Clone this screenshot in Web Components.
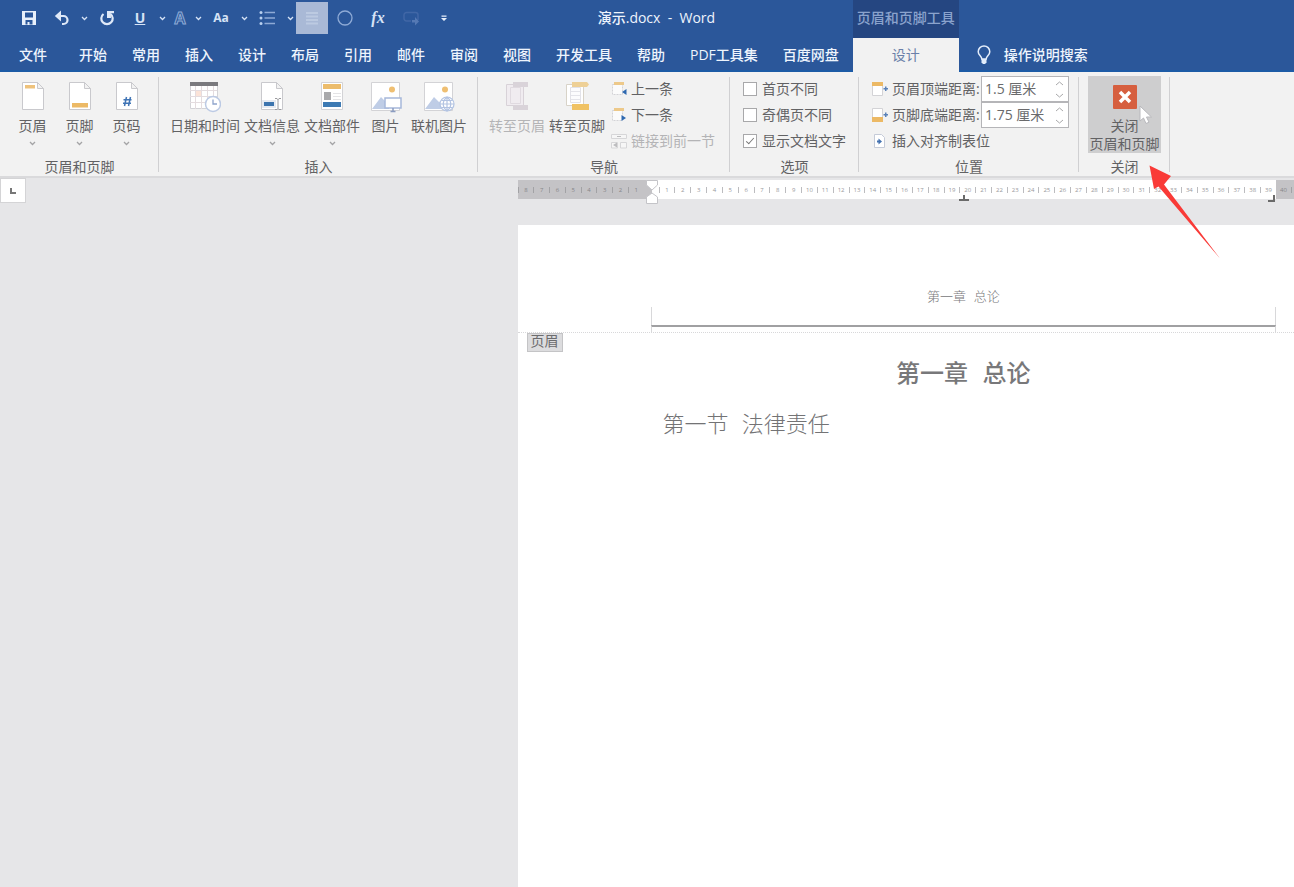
<!DOCTYPE html>
<html lang="zh-CN">
<head>
<meta charset="utf-8">
<title>演示.docx - Word</title>
<style>
  html, body { height: 100%; }
  body {
    margin: 0;
    background: #e6e6e8;
    color: #626264;
    font: 14px/18px "Open Sans", "Noto Sans CJK SC", sans-serif;
  }
</style>
</head>
<body>
<word-app></word-app>

<script>
const ICONS = {
  save: [16, 16, '<path fill="#e8f0fb" fill-rule="evenodd" d="M1 1h14v14H1zM4 2.500v5h8v-5zM4.500 10v4.500h2V12h2v2.500h3V10z"/>'],
  undo: [16, 16, '<path fill="none" stroke="#dfe9f8" stroke-width="2.200" d="M3 6h6.500a4 4 0 0 1 0 8H8"/><path fill="#dfe9f8" d="M7 .5v11L.8 6z"/>'],
  redo: [16, 16, '<path fill="none" stroke="#dfe9f8" stroke-width="2.200" d="M11.500 4A5.700 5.700 0 1 1 4.500 4"/><path fill="#dfe9f8" d="M8 1h7v2.200h-3.200L12 8H8z"/>'],
  list: [16, 16, '<g fill="#b9d0ef"><circle cx="2" cy="2.500" r="1.500"/><circle cx="2" cy="8" r="1.500"/><circle cx="2" cy="13.500" r="1.500"/></g><path stroke="#8eaad6" stroke-width="1.400" d="M5.500 2.500H16M5.500 8H16M5.500 13.500H16"/>'],
  align: [14, 14, '<path stroke="#bccae1" stroke-width="2" d="M1 2h12M1 5.500h12M1 9h12M1 12.500h12"/>'],
  circle: [16, 16, '<circle cx="8" cy="8" r="7" fill="none" stroke="#8fabd6" stroke-width="1.300"/>'],
  shape: [16, 16, '<path fill="none" stroke="#4167a6" stroke-width="1.500" d="M8 11H3.500a2.500 2.500 0 0 1-2.500-2.500V5a2.500 2.500 0 0 1 2.500-2.500h9A2.500 2.500 0 0 1 15 5v5"/><path fill="#5579b4" d="M9 10h3V7l4 4.500-4 4v-3H9z"/>'],
  more: [8, 8, '<path fill="#e8f0fb" d="M1.500 1.500h5v1.200h-5zM1 4h6L4 7z"/>'],
  chev: [7, 5, '<path fill="none" stroke="currentColor" stroke-width="1.300" d="M1 1l2.500 2.500L6 1"/>'],
  chevUp: [9, 5, '<path fill="none" stroke="currentColor" d="M1 4l3.500-3L8 4"/>'],
  chevDown: [9, 5, '<path fill="none" stroke="currentColor" d="M1 1l3.500 3L8 1"/>'],
  bulb: [14, 20, '<path fill="none" stroke="#e3edfb" stroke-width="1.500" d="M4.800 14c0-2.700-3.600-3.800-3.600-7.300a5.800 5.800 0 0 1 11.600 0c0 3.500-3.600 4.600-3.600 7.300z"/><path fill="#e3edfb" d="M4.500 14h5v3.500L8 19H6l-1.500-1.500z"/>'],
  header: [24, 30, '<path fill="#fff" stroke="#c9c9cd" d="M1.500 1.500h15l6 6v21h-21z"/><path fill="#f2f2f2" stroke="#c9c9cd" d="M16.500 1.500v6h6z"/><path fill="#eec27c" d="M4 4h10v3.500H4z"/>'],
  footer: [24, 30, '<path fill="#fff" stroke="#c9c9cd" d="M1.500 1.500h15l6 6v21h-21z"/><path fill="#f2f2f2" stroke="#c9c9cd" d="M16.500 1.500v6h6z"/><path fill="#ecb965" d="M4 22h16v4.500H4z"/>'],
  pageNumber: [24, 30, '<path fill="#fff" stroke="#c9c9cd" d="M1.500 1.500h15l6 6v21h-21z"/><path fill="#f2f2f2" stroke="#c9c9cd" d="M16.500 1.500v6h6z"/><path stroke="#3f74b5" stroke-width="1.500" d="M11.500 16l-2 9M15.500 16l-2 9M8.500 18.700h8M8 22.200h8"/>'],
  date: [32, 32, '<path fill="#fff" stroke="#d3d3d7" d="M1.500 4.500h27v23h-27z"/><path fill="#fbe3d8" d="M6 9h6v6H6z"/><path stroke="#e4dcdf" d="M1 9.500h27M1 15.500h27M1 21.500h27M6.500 4v24M12.500 4v24M18.500 4v24M24.500 4v24"/><path fill="#7a7a7e" d="M1 1h28v4H1z"/><circle cx="24" cy="23" r="7.500" fill="#fff" stroke="#bccae4" stroke-width="1.500"/><path fill="none" stroke="#8fa4cb" stroke-width="1.300" d="M24 18.500V23h4"/>'],
  docInfo: [24, 30, '<path fill="#fff" stroke="#c9c9cd" d="M1.500 1.500h15l6 6v21h-21z"/><path fill="#f2f2f2" stroke="#c9c9cd" d="M16.500 1.500v6h6z"/><path fill="#e6eaf1" d="M2 19h14v8H2z"/><path fill="#3c74ae" d="M4 21h10v4H4z"/><path fill="none" stroke="#9a9a9e" d="M15 17.500h2l1 1 1-1h2M18 18v9.500M15 28.500h2l1-1 1 1h2"/>'],
  parts: [24, 30, '<path fill="#fff" stroke="#d3d3d6" d="M1.500 1.500h21v27h-21z"/><path fill="#ecbc6b" d="M3 3h18v5H3z"/><path fill="#a9a9ab" d="M4 11h7v8H4z"/><path stroke="#e4e4e6" d="M13 12.500h8M13 15.500h8M13 18.500h8"/><path fill="#3d7ab3" d="M3 21h18v5H3z"/>'],
  picture: [32, 32, '<path fill="#fff" stroke="#d3d3d6" d="M1.500 1.500h28v28h-28z"/><circle cx="22" cy="8.500" r="3" fill="#efbf72"/><path fill="#bfcde6" d="M2 28l9-12 5 5 3-2v9H2z"/><path fill="#fff" stroke="#a6b8da" stroke-width="1.500" d="M15 17h16v10H15z"/><path stroke="#8b9cc0" stroke-width="1.500" d="M23 27v3M20.500 30.500h5"/>'],
  online: [32, 32, '<path fill="#fff" stroke="#d3d3d6" d="M1.500 1.500h28v28h-28z"/><circle cx="22" cy="8.500" r="3" fill="#efbf72"/><path fill="#bfcde6" d="M2 28l9-12 5 5 3-2v9H2z"/><g fill="#fff" stroke="#b2c3e2" stroke-width="1.200"><circle cx="24" cy="23" r="7"/><path fill="none" d="M17 23h14M24 16v14M18.500 19.500h11M18.500 26.500h11M24 16c-5 4-5 10 0 14M24 16c5 4 5 10 0 14"/></g>'],
  gotoHeader: [24, 30, '<path fill="#f0ecf0" stroke="#d8d2d8" d="M1.500 3.500h17v21h-17z"/><path fill="#d9d3d9" d="M8 1h15v5H8zM8 24h15v5H8z"/><path fill="#f0ecf0" stroke="#e0dae0" d="M5.500 6.500h10v16h-10z"/>'],
  gotoFooter: [24, 30, '<path fill="#fff" stroke="#d8d3c8" d="M1.500 3.500h17v21h-17z"/><path fill="#eed096" d="M7 1h15l2 2.500-2 2.500H7z"/><path fill="#fcfcfe" stroke="#e2e2e8" d="M5.500 6.500h10v15h-10z"/><path stroke="#e4e4ea" d="M6 10.500h9M6 14.500h9M6 18.500h9"/><path fill="#f0c264" d="M7 23h17v6H7z"/>'],
  prev: [16, 16, '<path fill="#fbfbfb" stroke="#d3d3d6" stroke-dasharray="2 1" d="M1.500 3.500h10v10h-10z"/><path fill="#edc98a" d="M3 1h10v3H3z"/><path fill="#2f69b0" d="M15.500 8v6L11 11z"/>'],
  next: [16, 16, '<path fill="#fbfbfb" stroke="#d3d3d6" stroke-dasharray="2 1" d="M1.500 3.500h10v10h-10z"/><path fill="#edc98a" d="M3 1h10v3H3z"/><path fill="#2f69b0" d="M10.500 8v6l4.500-3z"/>'],
  link: [16, 16, '<path fill="#f6f6f6" stroke="#d6d6d8" d="M.5 1.500h15v4H.5zM.5 15V9.500h6V15zM9.500 15V9.500h6V15z"/><path fill="#bdbdbf" d="M2 12l4-2.500v5zM6 3h4v1H6z"/>'],
  topDistance: [16, 16, '<path fill="#fff" stroke="#d3d3d6" d="M.5 1.500h10v13H.5z"/><path fill="#ecb965" d="M0 1h11v4H0z"/><path fill="#5b82b8" d="M13 5.500h1.500V7H16v1.500h-1.500V10H13V8.500h-1.500V7H13z"/>'],
  bottomDistance: [16, 16, '<path fill="#fff" stroke="#d3d3d6" d="M.5 1.500h10v13H.5z"/><path fill="#ecb965" d="M0 10h11v5H0z"/><path fill="#5b82b8" d="M13 5.500h1.500V7H16v1.500h-1.500V10H13V8.500h-1.500V7H13z"/>'],
  alignTab: [16, 16, '<path fill="#fff" stroke="#c5cbd8" d="M2.500 1.500h7l3 3v10h-10z"/><path fill="#4472b0" d="M5 7.500h1.500v-2l3.500 3-3.500 3v-2H5z"/>'],
  close: [26, 26, '<rect x="1" y="1" width="24" height="24" rx="1" fill="#d65f3f"/><path stroke="#fff" stroke-width="3.500" d="M8 8l10 10M18 8L8 18"/>'],
  cursor: [14, 20, '<path fill="#fff" stroke="#b9b9bd" d="M1 1v15l3.500-3 2.500 5.500 3-1.300-2.500-5.200H12.500z"/>'],
  arrow: [72, 94, '<path fill="#f93a37" d="M.5.500L22 11l-7 8.500L71 93.500 9.500 21.500 5 24z"/>'],
  indent: [12, 24, '<path fill="#fff" stroke="#c4c4c8" d="M.5.500h11v4.500L6 10 .5 5zM6 13l5.500 4v6.500H.5V17z"/>'],
  centerTab: [10, 6, '<path stroke="#6a6a6a" stroke-width="2" d="M5 0v5M0 5h10"/>'],
  cornerTab: [8, 8, '<path fill="none" stroke="#777" stroke-width="2" d="M2 1v5h5"/>'],
  rightTab: [8, 8, '<path fill="none" stroke="#6a6a6a" stroke-width="2" d="M6 0v6H0"/>'],
};

/* Registers an element whose shadow root is built from its attributes. */
function element(tag, render) {
  customElements.define(tag, class extends HTMLElement {
    constructor() { super(); this.attachShadow({ mode: 'open' }); }
    connectedCallback() {
      if (this.shadowRoot.hasChildNodes()) return;
      const template = document.createElement('template');
      template.innerHTML = render(this);
      this.shadowRoot.append(template.content.cloneNode(true));
    }
  });
}
const RESET = `button { font: inherit; color: inherit; background: none; border: 0; padding: 0; margin: 0; }`;

element('app-icon', el => {
  const [w, h, body] = ICONS[el.getAttribute('name')];
  return `<style>:host{display:inline-flex;flex:none} svg{display:block}</style>
    <svg width="${w}" height="${h}" viewBox="0 0 ${w} ${h}" aria-hidden="true">${body}</svg>`;
});

/* Quick access toolbar button */
element('quick-button', el => `<style>${RESET}
  :host { display: block; flex: 0 0 34px; height: 32px; color: #d6e3f6; }
  :host([size="menu"]) { flex-basis: 12px; }
  :host([size="small"]) { flex-basis: 24px; }
  :host([size="wide"]) { flex-basis: 32px; }
  :host([active]) { background: #a9b9d6; }
  button { width: 100%; height: 100%; display: flex; align-items: center; justify-content: center; }
  </style><button aria-label="${el.getAttribute('label')}"><slot></slot></button>`);

element('ribbon-tab', el => `<style>
  :host { display: block; }
  a { display: block; line-height: 34px; color: #eef4fd; font-weight: 500; text-decoration: none; white-space: nowrap; }
  :host([active]) a { background: #f2f2f2; color: #6a7fa8; text-align: center; font-weight: 400; }
  </style><a href="#"><slot></slot></a>`);

element('title-bar', () => `<style>${RESET}
  :host { display: grid; grid-template: 38px 34px / auto 106px 1fr; background: #2b579a; box-shadow: inset 0 -2px #1d5ba6; }
  .top { display: flex; align-items: center; padding: 0 0 2px 12px; }
  h1 { flex: 1; margin: 0; font-size: 14px; line-height: 18px; font-weight: 500; color: #eef4fd; text-align: center; white-space: pre; }
  .context { background: #254681; color: #8ba3cd; font-weight: 500; line-height: 36px; text-align: center; white-space: nowrap; }
  nav { grid-area: 2 / 1; display: flex; gap: 25px; padding: 0 14px 0 19px; }
  nav ribbon-tab:first-child { margin-right: 7px; }
  .design { grid-area: 2 / 2; }
  .tell { grid-area: 2 / 3; display: flex; align-items: center; gap: 13px; padding-left: 18px; color: #eef4fd; font-weight: 500; }
  .u { font-weight: 700; text-decoration: underline; }
  .a { color: #2b579a; font-size: 16px; font-weight: 700; -webkit-text-stroke: 1px #8fabd6; }
  .aa { font-size: 12px; font-weight: 700; }
  .fx { font: italic 700 16px "Liberation Serif", serif; }
  </style>
  <div class="top">
    <quick-button label="保存"><app-icon name="save"></app-icon></quick-button>
    <quick-button label="撤消" size="wide"><app-icon name="undo"></app-icon></quick-button>
    <quick-button label="撤消列表" size="menu"><app-icon name="chev"></app-icon></quick-button>
    <quick-button label="重复"><app-icon name="redo"></app-icon></quick-button>
    <quick-button label="下划线" size="wide"><span class="u">U</span></quick-button>
    <quick-button label="下划线样式" size="menu"><app-icon name="chev"></app-icon></quick-button>
    <quick-button label="文本效果" size="small"><span class="a">A</span></quick-button>
    <quick-button label="文本效果列表" size="menu"><app-icon name="chev"></app-icon></quick-button>
    <quick-button label="更改大小写"><span class="aa">Aa</span></quick-button>
    <quick-button label="大小写列表" size="menu"><app-icon name="chev"></app-icon></quick-button>
    <quick-button label="项目符号"><app-icon name="list"></app-icon></quick-button>
    <quick-button label="项目符号列表" size="menu"><app-icon name="chev"></app-icon></quick-button>
    <quick-button label="对齐" size="wide" active><app-icon name="align"></app-icon></quick-button>
    <quick-button label="椭圆"><app-icon name="circle"></app-icon></quick-button>
    <quick-button label="公式" size="wide"><span class="fx">fx</span></quick-button>
    <quick-button label="形状"><app-icon name="shape"></app-icon></quick-button>
    <quick-button label="自定义快速访问工具栏" size="wide"><app-icon name="more"></app-icon></quick-button>
    <h1>演示.docx  -  Word</h1>
  </div>
  <div class="context">页眉和页脚工具</div>
  <nav>${'文件 开始 常用 插入 设计 布局 引用 邮件 审阅 视图 开发工具 帮助 PDF工具集 百度网盘'.split(' ')
    .map(t => `<ribbon-tab>${t}</ribbon-tab>`).join('')}</nav>
  <ribbon-tab class="design" active>设计</ribbon-tab>
  <button class="tell"><app-icon name="bulb"></app-icon>操作说明搜索</button>`);

element('ribbon-group', el => `<style>
  :host { display: flex; flex-direction: column; flex: none; background: linear-gradient(#d0d0d2, #d0d0d2) right 5px / 1px 95px no-repeat; }
  .items { flex: 1 1 0; min-height: 0; display: flex; padding: 4px 9px 0; }
  .label { flex: none; height: 18px; text-align: center; line-height: 18px; }
  </style><div class="items"><slot></slot></div><div class="label">${el.getAttribute('label')}</div>`);

/* Tall ribbon button: picture, caption, optional menu mark */
element('ribbon-button', el => `<style>${RESET}
  :host { display: block; flex: 0 0 60px; }
  :host([size="narrow"]) { flex-basis: 47px; }
  :host([size="wide"]) { flex-basis: 74px; }
  :host([disabled]) { color: #b4b4b6; }
  button { width: 100%; display: flex; flex-direction: column; align-items: center; padding-top: 5px; white-space: nowrap; }
  .pic { height: 36px; }
  .menu { color: #a4a4a6; margin-top: 6px; }
  </style><button ${el.hasAttribute('disabled') ? 'disabled' : ''}>
    <app-icon class="pic" name="${el.getAttribute('icon')}"></app-icon><span><slot></slot></span>
    ${el.hasAttribute('menu') ? '<app-icon class="menu" name="chev"></app-icon>' : ''}</button>`);

element('ribbon-row', el => `<style>${RESET}
  :host { display: block; height: 26px; }
  :host([disabled]) { color: #b4b4b6; }
  button { display: flex; align-items: center; gap: 4px; height: 26px; white-space: nowrap; }
  </style><button ${el.hasAttribute('disabled') ? 'disabled' : ''}>
    <app-icon name="${el.getAttribute('icon')}"></app-icon><slot></slot></button>`);

element('check-option', el => `<style>
  :host { display: block; height: 26px; }
  label { display: flex; align-items: center; gap: 5px; height: 26px; white-space: nowrap; }
  input { appearance: none; flex: none; width: 14px; height: 14px; margin: 0; border: 1px solid #a8a8aa; background: #fff; }
  input:checked { display: grid; place-items: center; }
  input:checked::before { content: ""; width: 7px; height: 3px; border: solid #777; border-width: 0 0 1px 1px; transform: translateY(-1px) rotate(-48deg); }
  </style><label><input type="checkbox" ${el.hasAttribute('checked') ? 'checked' : ''}><slot></slot></label>`);

element('distance-field', el => `<style>${RESET}
  :host { display: flex; align-items: center; height: 26px; }
  label { display: flex; align-items: center; gap: 4px; flex: 0 0 109px; white-space: nowrap; }
  .box { display: flex; box-sizing: border-box; width: 88px; height: 26px; border: 1px solid #b5b5b8; background: #fff; }
  input { flex: 1; min-width: 0; border: 0; padding: 0 0 0 3px; background: none; font: inherit; color: #6a6a6c; outline: 0; }
  .spin { display: grid; width: 18px; color: #a8a8aa; }
  .spin button { display: grid; place-items: center; }
  </style><label for="v"><app-icon name="${el.getAttribute('icon')}"></app-icon>${el.getAttribute('label')}</label>
  <div class="box"><input id="v" value="${el.getAttribute('value')}">
    <div class="spin"><button aria-label="增加"><app-icon name="chevUp"></app-icon></button>
    <button aria-label="减少"><app-icon name="chevDown"></app-icon></button></div></div>`);

element('close-button', () => `<style>${RESET}
  :host { display: block; position: relative; }
  button { display: flex; flex-direction: column; align-items: center; width: 73px; height: 77px; padding-top: 8px; background: #cececf; white-space: nowrap; }
  .pic { height: 33px; }
  span { line-height: 18px; height: 18px; }
  .pointer { position: absolute; left: 51px; top: 29px; }
  </style><button><app-icon class="pic" name="close"></app-icon><span>关闭</span><span>页眉和页脚</span></button>
  <app-icon class="pointer" name="cursor"></app-icon>`);

element('ribbon-bar', () => `<style>
  :host { display: flex; box-sizing: border-box; height: 106px; background: #f2f2f2; border-bottom: 2px solid #dadadc; }
  .rows { display: flex; flex-direction: column; }
  .nav { padding: 0 6px 0 4px; }
  .options, .position { padding: 0 4px; }
  .position { padding-right: 1px; }
  </style>
  <ribbon-group label="页眉和页脚">
    <ribbon-button icon="header" size="narrow" menu>页眉</ribbon-button>
    <ribbon-button icon="footer" size="narrow" menu>页脚</ribbon-button>
    <ribbon-button icon="pageNumber" size="narrow" menu>页码</ribbon-button>
  </ribbon-group>
  <ribbon-group label="插入">
    <ribbon-button icon="date" size="wide">日期和时间</ribbon-button>
    <ribbon-button icon="docInfo" menu>文档信息</ribbon-button>
    <ribbon-button icon="parts" menu>文档部件</ribbon-button>
    <ribbon-button icon="picture" size="narrow">图片</ribbon-button>
    <ribbon-button icon="online">联机图片</ribbon-button>
  </ribbon-group>
  <ribbon-group label="导航">
    <ribbon-button icon="gotoHeader" disabled>转至页眉</ribbon-button>
    <ribbon-button icon="gotoFooter">转至页脚</ribbon-button>
    <div class="rows nav">
      <ribbon-row icon="prev">上一条</ribbon-row>
      <ribbon-row icon="next">下一条</ribbon-row>
      <ribbon-row icon="link" disabled>链接到前一节</ribbon-row>
    </div>
  </ribbon-group>
  <ribbon-group label="选项">
    <div class="rows options">
      <check-option>首页不同</check-option>
      <check-option>奇偶页不同</check-option>
      <check-option checked>显示文档文字</check-option>
    </div>
  </ribbon-group>
  <ribbon-group label="位置">
    <div class="rows position">
      <distance-field icon="topDistance" label="页眉顶端距离:" value="1.5 厘米"></distance-field>
      <distance-field icon="bottomDistance" label="页脚底端距离:" value="1.75 厘米"></distance-field>
      <ribbon-row icon="alignTab">插入对齐制表位</ribbon-row>
    </div>
  </ribbon-group>
  <ribbon-group label="关闭"><close-button></close-button></ribbon-group>`);

const cells = (from, to) => {
  const step = from < to ? 1 : -1, out = [];
  for (let n = from; n !== to + step; n += step) out.push(`<span>${n}</span>`);
  return out.join('');
};
element('doc-ruler', () => `<style>
  :host { display: flex; height: 19px; font-size: 6px; line-height: 19px; color: #98989b; background: #fff; }
  div { display: flex; box-sizing: border-box; align-items: center; }
  .margin { background: #c4c3c6; flex: none; overflow: hidden; color: #858588; }
  .before { width: 134px; padding-right: 8px; }
  .after { width: 18px; }
  .body { flex: 1; padding-left: 7px; position: relative; }
  span { flex: 1 1 0; text-align: center; line-height: 6px; border-left: 1px solid #bcbcbf; }
  .margin span { border-color: #a2a2a5; }
  .after span { flex: 0 0 15px; border-left: 0; border-right: 1px solid #a2a2a5; }
  .mark { position: absolute; }
  .indent { left: -6px; top: 0; }
  .center { left: calc(50% - 5px); bottom: -2px; }
  .end { right: 0; bottom: -4px; }
  </style>
  <div class="margin before">${cells(8, 1)}</div>
  <div class="body">${cells(1, 39)}
    <app-icon class="mark indent" name="indent"></app-icon>
    <app-icon class="mark center" name="centerTab"></app-icon>
    <app-icon class="mark end" name="rightTab"></app-icon></div>
  <div class="margin after">${cells(40, 40)}</div>`);

element('doc-page', () => `<style>
  :host { display: block; background: #fff; font-family: "Liberation Mono", "Noto Sans CJK SC", sans-serif; }
  header { display: flex; padding: 64px 18px 0 133px; border-bottom: 1px dotted #d8d8da; }
  .band { flex: 1; }
  p { margin: 0; }
  .running { font-size: 13px; line-height: 18px; font-weight: 300; text-align: center; color: #77777a; }
  .frame { height: 18px; border: solid #d8d8da; border-width: 0 1px; }
  .rule { height: 5px; border: solid #d8d8da; border-width: 0 1px; border-top: 2px solid #a0a0a2; }
  .tag { display: inline-block; margin-left: 9px; padding: 0 3px; border: 1px solid #c4c4c6; background: #dcdcde; line-height: 17px; height: 17px; color: #6c6c6e; vertical-align: top; }
  main { padding: 0 18px 0 133px; }
  h2 { margin: 8px 0 20px; font-size: 24px; line-height: 32px; font-weight: 500; text-align: center; color: #78787a; }
  h3 { margin: 0 0 0 12px; font-size: 22px; line-height: 30px; font-weight: 300; color: #737375; }
  </style>
  <header><div class="band"><p class="running">第一章 总论</p><div class="frame"></div><div class="rule"></div></div></header>
  <div class="tag">页眉</div>
  <main><h2>第一章 总论</h2><h3>第一节 法律责任</h3></main>`);

element('word-app', () => `<style>
  :host { display: flex; flex-direction: column; min-height: 100vh; position: relative; overflow: hidden; }
  .work { flex: 1; display: grid; grid-template: 47px 1fr / 40% 1fr; }
  .corner { box-sizing: border-box; width: 26px; height: 25px; display: grid; place-items: center; background: #fff; border: 1px solid #d4d4d6; }
  doc-ruler { margin-top: 2px; }
  doc-page { grid-area: 2 / 2; }
  .arrow { position: absolute; left: 1149px; top: 165px; }
  </style>
  <title-bar></title-bar>
  <ribbon-bar></ribbon-bar>
  <div class="work">
    <div><div class="corner"><app-icon name="cornerTab"></app-icon></div></div>
    <doc-ruler></doc-ruler>
    <doc-page></doc-page>
  </div>
  <app-icon class="arrow" name="arrow"></app-icon>`);
</script>
</body>
</html>
